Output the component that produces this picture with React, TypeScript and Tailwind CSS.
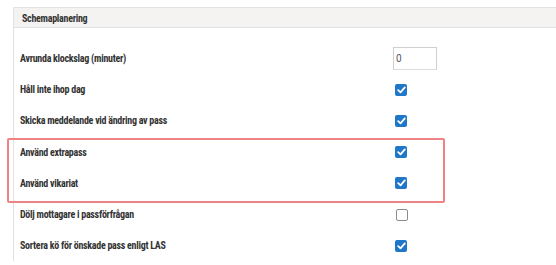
type Row = { label: string; kind: "input" | "checked" | "unchecked" };

const rows: Row[] = [
  { label: "Avrunda klockslag (minuter)", kind: "input" },
  { label: "Håll inte ihop dag", kind: "checked" },
  { label: "Skicka meddelande vid ändring av pass", kind: "checked" },
  { label: "Använd extrapass", kind: "checked" },
  { label: "Använd vikariat", kind: "checked" },
  { label: "Dölj mottagare i passförfrågan", kind: "unchecked" },
  { label: "Sortera kö för önskade pass enligt LAS", kind: "checked" },
];

function Checkbox({ checked }: { checked: boolean }) {
  if (!checked) {
    return <div className="ml-[3px] w-[12px] h-[12px] rounded-[2px] border border-[#8c8c8c] bg-white" />;
  }
  return (
    <div className="ml-[2px] w-[12px] h-[12px] rounded-[2px] bg-[#1f77c7] flex items-center justify-center">
      <svg width="9" height="8" viewBox="0 0 9 8" fill="none">
        <path d="M1.2 4.2 L3.5 6.3 L7.8 1.4" stroke="white" strokeWidth="1.8" strokeLinecap="round" strokeLinejoin="round" />
      </svg>
    </div>
  );
}

export default function App() {
  return (
    <div className="relative min-h-[265px] bg-white pt-[7px] pl-[13px] font-['Roboto_Condensed',sans-serif] text-[10px] tracking-[-0.28px] font-bold text-[#333]">
      <div className="border-l border-t border-[#e2e2e2]">
        <div className="h-[20px] bg-[#f4f3f1] border-b border-[#e2e2e2] px-2 pt-[1px] flex items-center">Schemaplanering</div>
        <div className="pt-[15px] pl-[6px]">
          {rows.map((r) => (
            <div key={r.label} className="grid grid-cols-[373px_auto] h-[31.2px] items-center">
              <span>{r.label}</span>
              {r.kind === "input" ? (
                <div className="w-[44px] h-[23px] border border-[#cfcfcf] border-b-[#dcdcdc] flex items-center pl-[2px] font-normal tracking-normal text-[10px] text-[#556] font-['Roboto',sans-serif]">
                  0
                </div>
              ) : (
                <Checkbox checked={r.kind === "checked"} />
              )}
            </div>
          ))}
        </div>
      </div>
      <div className="absolute left-[7px] top-[138px] w-[438px] h-[65px] border-2 border-[#ef8282] rounded-[2px]" />
    </div>
  );
}
